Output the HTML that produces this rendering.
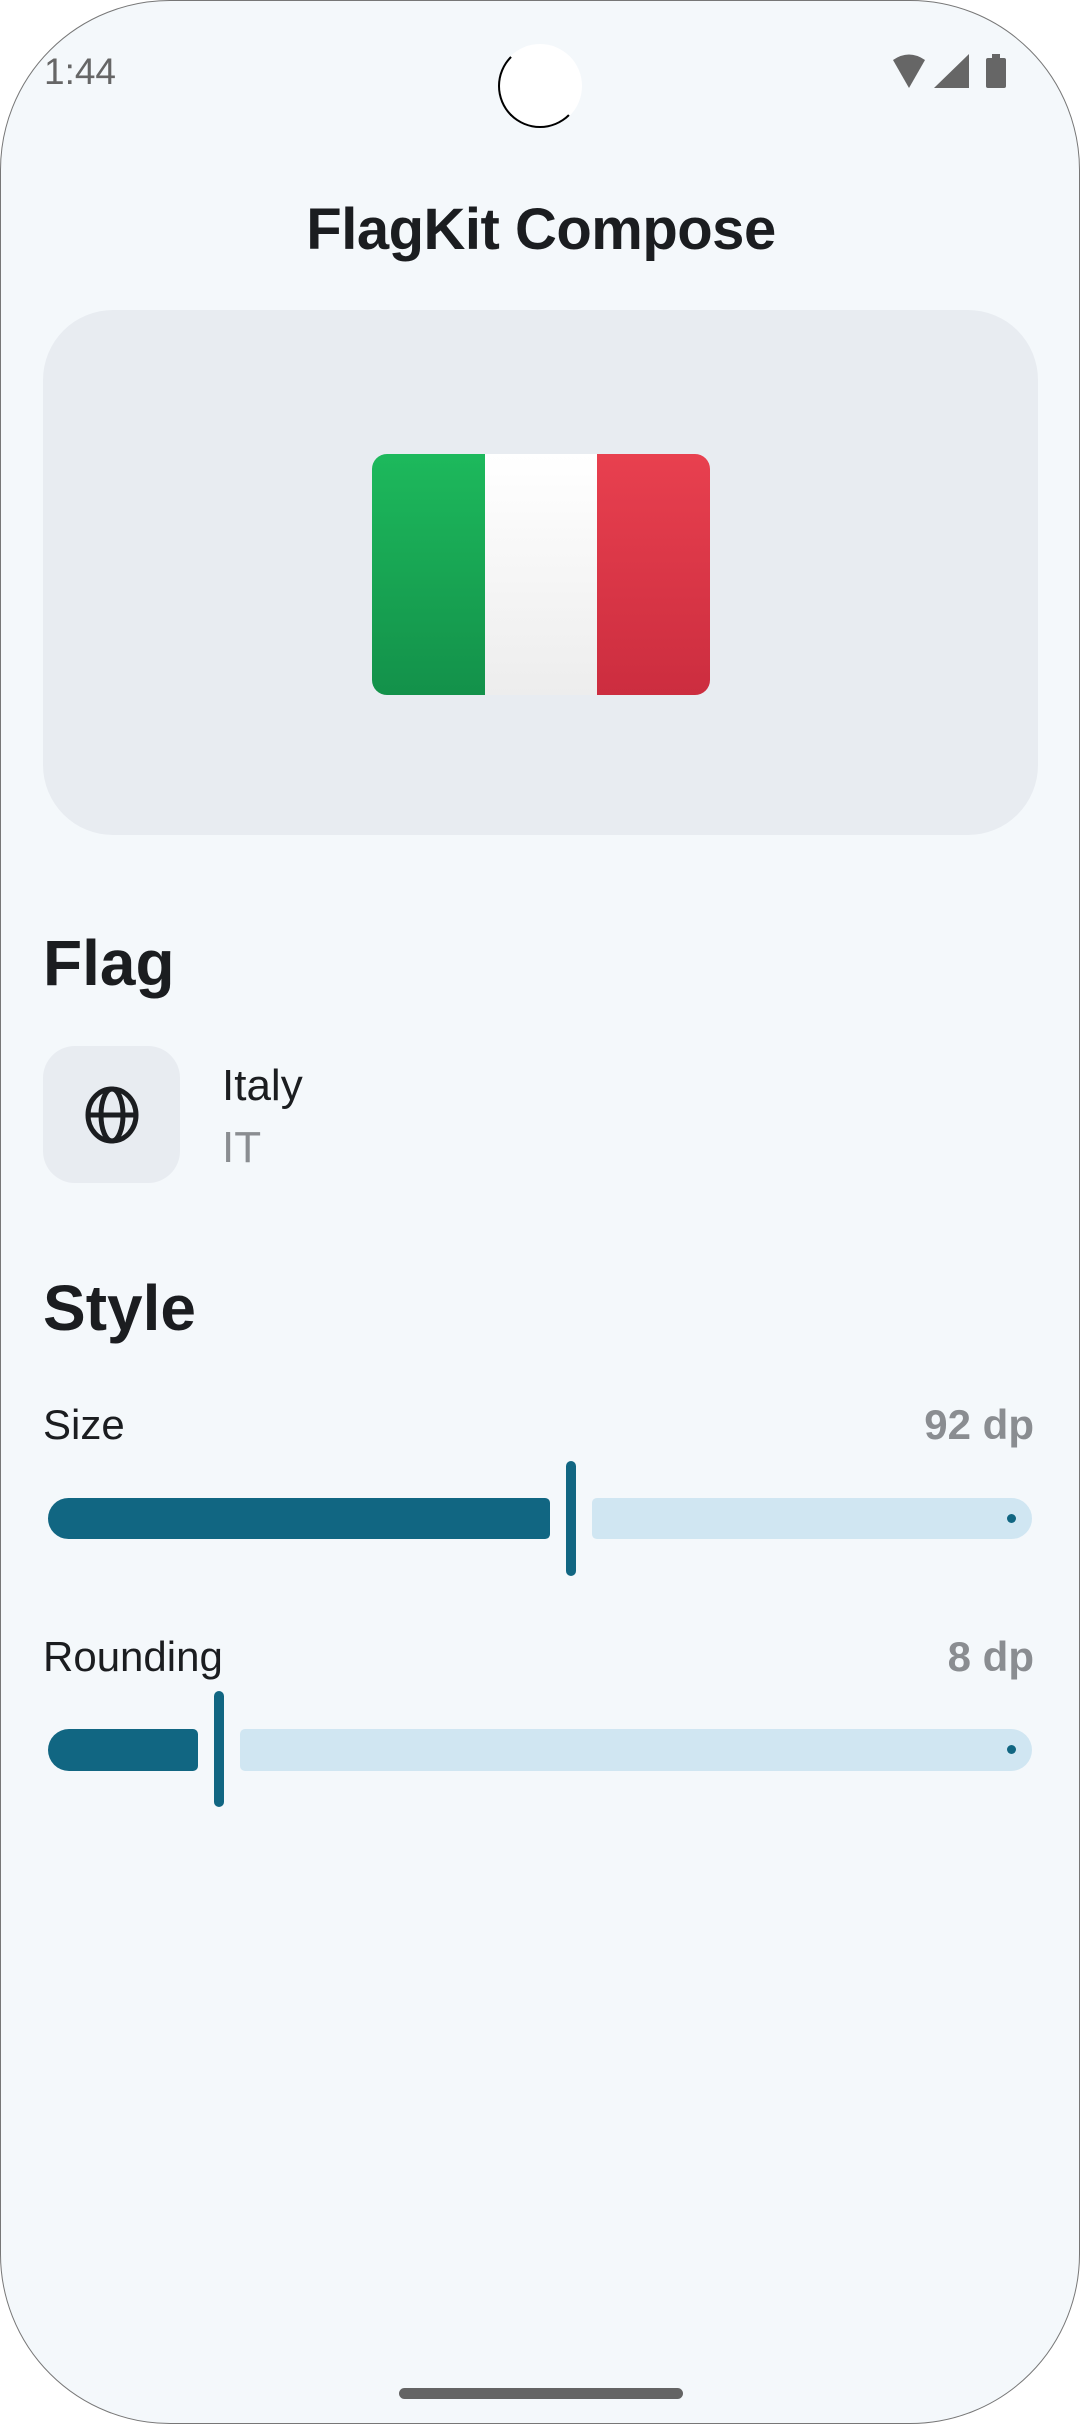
<!DOCTYPE html>
<html><head><meta charset="utf-8"><style>
*{margin:0;padding:0;box-sizing:border-box}
html,body{width:1080px;height:2424px;background:#fff;overflow:hidden}
body{font-family:"Liberation Sans",sans-serif;position:relative}
.dev{position:absolute;left:0;top:0;width:1080px;height:2424px;background:#f4f8fb;border-radius:170px;border:1px solid #777;overflow:hidden}
.abs{position:absolute}
</style></head><body>
<div class="dev">
<div class="abs" style="left:43px;top:50px;font-size:37px;color:#666;">1:44</div>
<div class="abs" style="left:497px;top:43px;width:84px;height:84px;border-radius:50%;background:#fff;border:2px solid #000;border-top-color:#fff;border-right-color:#fff"></div>
<svg class="abs" style="left:888px;top:50px" width="124" height="40" viewBox="0 0 124 40">
<path d="M4 9 Q20 -2 36 9 L20 37 Z" fill="#666"/>
<path d="M80 3 L80 37 L45 37 Z" fill="#666"/>
<rect x="97" y="7" width="20" height="30" rx="2" fill="#666"/><rect x="103" y="3" width="8" height="5" fill="#666"/>
</svg>
<div class="abs" style="left:0;width:1080px;top:195px;text-align:center;font-size:58px;font-weight:bold;color:#1b1d20;letter-spacing:-0.5px">FlagKit Compose</div>
<div class="abs" style="left:42px;top:309px;width:995px;height:525px;border-radius:70px;background:#e8ecf1"></div>
<div class="abs" style="left:371px;top:453px;width:338px;height:241px;border-radius:15px;overflow:hidden;display:flex">
<div style="flex:1;background:linear-gradient(#1db95c,#13914a)"></div>
<div style="flex:1;background:linear-gradient(#fff,#ededed)"></div>
<div style="flex:1;background:linear-gradient(#e8404f,#cc2d3f)"></div>
</div>
<div class="abs" style="left:42px;top:925px;font-size:64px;font-weight:bold;color:#1b1d20">Flag</div>
<div class="abs" style="left:42px;top:1045px;width:137px;height:137px;border-radius:32px;background:#e8ecf1"></div>
<svg class="abs" style="left:80px;top:1083px" width="62" height="62" viewBox="0 0 62 62" fill="none" stroke="#1b1d20" stroke-width="5">
<ellipse cx="31" cy="31" rx="24" ry="26"/><ellipse cx="31" cy="31" rx="11" ry="26"/><line x1="7" y1="31" x2="55" y2="31"/>
</svg>
<div class="abs" style="left:221px;top:1060px;font-size:44px;color:#1b1d20">Italy</div>
<div class="abs" style="left:221px;top:1122px;font-size:44px;color:#8a8d91">IT</div>
<div class="abs" style="left:42px;top:1270px;font-size:64px;font-weight:bold;color:#1b1d20">Style</div>
<div class="abs" style="left:42px;top:1400px;font-size:42px;color:#1b1d20">Size</div>
<div class="abs" style="right:45px;top:1400px;font-size:42px;font-weight:bold;color:#8a8d91">92 dp</div>
<div class="abs" style="left:47px;top:1497px;width:502px;height:41px;background:#116682;border-radius:21px 5px 5px 21px"></div>
<div class="abs" style="left:565px;top:1460px;width:10px;height:115px;background:#116682;border-radius:5px"></div>
<div class="abs" style="left:591px;top:1497px;width:440px;height:41px;background:#d0e6f2;border-radius:5px 21px 21px 5px"></div>
<div class="abs" style="left:1006px;top:1513px;width:9px;height:9px;background:#116682;border-radius:50%"></div>
<div class="abs" style="left:42px;top:1632px;font-size:42px;color:#1b1d20">Rounding</div>
<div class="abs" style="right:45px;top:1632px;font-size:42px;font-weight:bold;color:#8a8d91">8 dp</div>
<div class="abs" style="left:47px;top:1728px;width:150px;height:42px;background:#116682;border-radius:21px 5px 5px 21px"></div>
<div class="abs" style="left:213px;top:1690px;width:10px;height:116px;background:#116682;border-radius:5px"></div>
<div class="abs" style="left:239px;top:1728px;width:792px;height:42px;background:#d0e6f2;border-radius:5px 21px 21px 5px"></div>
<div class="abs" style="left:1006px;top:1744px;width:9px;height:9px;background:#116682;border-radius:50%"></div>
<div class="abs" style="left:398px;top:2387px;width:284px;height:11px;background:#646464;border-radius:6px"></div>
</div>
</body></html>
